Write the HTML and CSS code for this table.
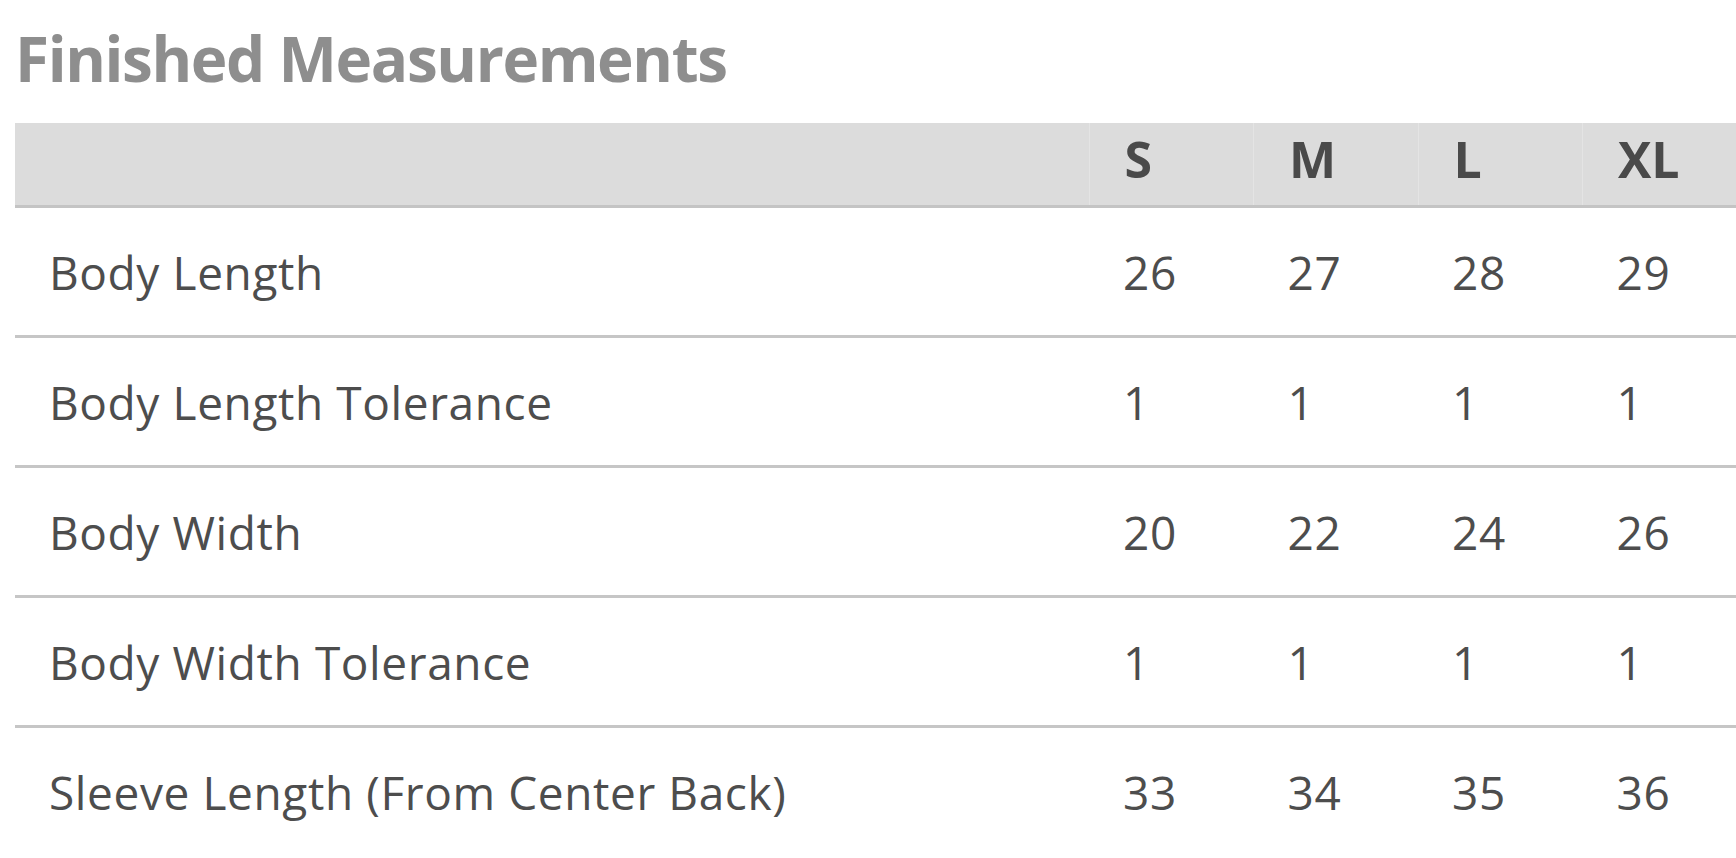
FILE: index.html
```html
<!DOCTYPE html>
<html lang="en">
<head>
<meta charset="utf-8">
<title>Finished Measurements</title>
<link rel="stylesheet" href="styles.css">
</head>
<body>
<div class="page">
  <h1 class="title">Finished Measurements</h1>
  <table class="sizes">
    <colgroup>
      <col class="col-name">
      <col class="col-size">
      <col class="col-size">
      <col class="col-size">
      <col class="col-size">
    </colgroup>
    <thead>
      <tr class="head-row">
        <th class="head-cell head-blank"></th>
        <th class="head-cell">S</th>
        <th class="head-cell">M</th>
        <th class="head-cell">L</th>
        <th class="head-cell">XL</th>
      </tr>
    </thead>
    <tbody>
      <tr class="row"><td class="cell">Body Length</td><td class="cell">26</td><td class="cell">27</td><td class="cell">28</td><td class="cell">29</td></tr>
      <tr class="row"><td class="cell">Body Length Tolerance</td><td class="cell">1</td><td class="cell">1</td><td class="cell">1</td><td class="cell">1</td></tr>
      <tr class="row"><td class="cell">Body Width</td><td class="cell">20</td><td class="cell">22</td><td class="cell">24</td><td class="cell">26</td></tr>
      <tr class="row"><td class="cell">Body Width Tolerance</td><td class="cell">1</td><td class="cell">1</td><td class="cell">1</td><td class="cell">1</td></tr>
      <tr class="row"><td class="cell">Sleeve Length (From Center Back)</td><td class="cell">33</td><td class="cell">34</td><td class="cell">35</td><td class="cell">36</td></tr>
    </tbody>
  </table>
</div>
</body>
</html>
```

FILE: styles.css
```css
html, body {
  margin: 0;
  padding: 0;
  overflow: hidden;
  background: #ffffff;
}

.page {
  padding: 27px 0 0 15px;
  font-family: "Open Sans", "Noto Sans", sans-serif;
}

.title {
  margin: 0 0 34px 0;
  font-size: 62px;
  line-height: 62px;
  font-weight: 700;
  letter-spacing: -1.4px;
  color: #8e8e8e;
}

.sizes {
  table-layout: fixed;
  width: 1732px;
  border-collapse: collapse;
  border-spacing: 0;
}

.col-name { width: 1074px; }
.col-size { width: 164.5px; }

.head-row {
  background: #dcdcdc;
  border-bottom: 3px solid #c4c4c4;
}

.head-cell {
  height: 50px;
  padding: 11px 0 21px 35px;
  text-align: left;
  font-size: 50px;
  line-height: 50px;
  font-weight: 700;
  color: #4a4a4a;
  border-left: 1px solid #e4e4e4;
}

.head-blank {
  border-left: none;
}

.row {
  border-bottom: 3px solid #c6c6c6;
}

.row:last-child {
  border-bottom: none;
}

.cell {
  height: 127px;
  padding: 0 0 0 34px;
  font-size: 46px;
  line-height: 50px;
  letter-spacing: 0.6px;
  color: #4d4d4d;
  vertical-align: middle;
  white-space: nowrap;
}
```
